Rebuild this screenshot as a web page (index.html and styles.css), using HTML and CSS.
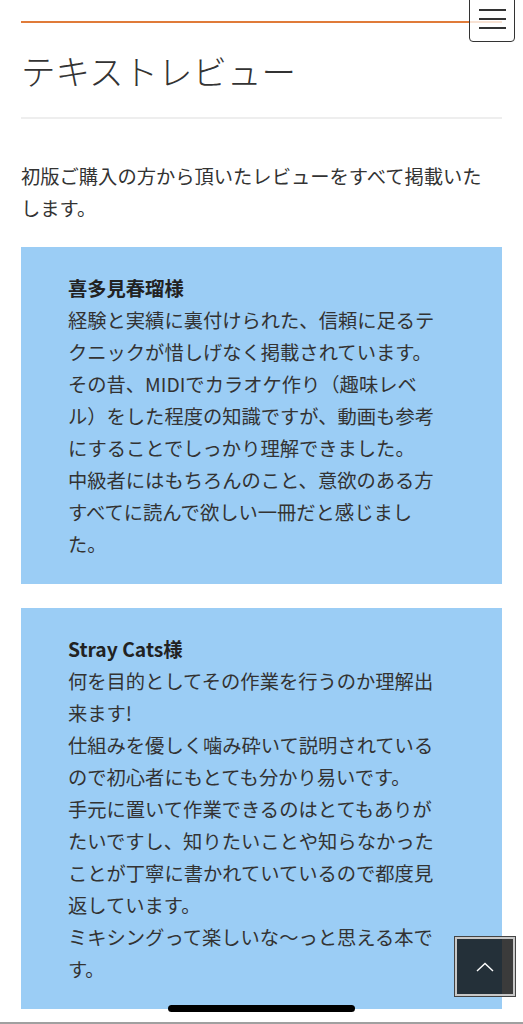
FILE: index.html
```html
<!DOCTYPE html>
<html lang="ja">
<head>
<meta charset="utf-8">
<title>テキストレビュー</title>
<link rel="stylesheet" href="styles.css">
</head>
<body>
<main class="page">
  <div class="top-rule"></div>
  <h1 class="title">テキストレビュー</h1>
  <div class="title-rule"></div>
  <p class="intro">初版ご購入の方から頂いたレビューをすべて掲載いたします。</p>

  <section class="review">
    <p class="name">喜多見春瑠様</p>
    <p class="body">経験と実績に裏付けられた、信頼に足るテクニックが惜しげなく掲載されています。<br>その昔、MIDIでカラオケ作り（趣味レベル）をした程度の知識ですが、動画も参考にすることでしっかり理解できました。<br>中級者にはもちろんのこと、意欲のある方すべてに読んで欲しい一冊だと感じました。</p>
  </section>

  <section class="review">
    <p class="name">Stray Cats様</p>
    <p class="body">何を目的としてその作業を行うのか理解出来ます!<br>仕組みを優しく噛み砕いて説明されているので初心者にもとても分かり易いです。<br>手元に置いて作業できるのはとてもありがたいですし、知りたいことや知らなかったことが丁寧に書かれていているので都度見返しています。<br>ミキシングって楽しいな〜っと思える本です。</p>
  </section>
  <div class="bottom-rule"></div>
</main>

<button class="menu-btn" aria-label="メニュー">
  <span class="bar"></span><span class="bar"></span><span class="bar"></span>
</button>

<button class="totop" aria-label="ページトップへ">
  <svg width="18" height="10" viewBox="0 0 18 10"><path d="M1 9 L9 1.5 L17 9" fill="none" stroke="#fff" stroke-width="1.4"/></svg>
</button>

<div class="home-indicator"></div>
</body>
</html>
```

FILE: styles.css
```css
* { box-sizing: border-box; }
html, body { margin: 0; padding: 0; background: #fff; }
body {
  font-family: "Noto Sans CJK JP", "Noto Sans", sans-serif;
  color: #333;
  overflow: hidden;
}
.page {
  padding: 21px 21px 0 21px;
}
.top-rule {
  height: 2px;
  background: #e07b39;
}
.title {
  margin: 23px 0 0 0;
  font-size: 34.5px;
  line-height: 48px;
  font-weight: 300;
  color: #333;
  letter-spacing: 0;
}
.title-rule {
  margin-top: 23px;
  height: 2px;
  background: #eeeeee;
}
.intro {
  margin: 41px 0 23px 0;
  padding-right: 10px;
  font-size: 19.3px;
  line-height: 32px;
}
.review {
  background: #9bcdf5;
  padding: 25px 60px 24px 47px;
  margin-bottom: 24px;
}
.review .name {
  margin: 0;
  font-size: 19.3px;
  line-height: 32px;
  font-weight: 700;
  color: #222;
}
.review .body {
  margin: 0;
  font-size: 19.3px;
  line-height: 32px;
  color: #333;
}
.bottom-rule {
  position: fixed;
  left: 0; right: 0; bottom: 0;
  height: 2px;
  background: #a0a0a0;
}
.menu-btn {
  position: fixed;
  top: -8px;
  right: 8px;
  width: 46px;
  height: 50px;
  padding: 0;
  background: rgba(255,255,255,0.78);
  border: 1px solid #333;
  border-radius: 4px;
  display: flex;
  flex-direction: column;
  align-items: center;
  justify-content: flex-start;
  gap: 7px;
  padding-top: 16px;
}
.menu-btn .bar {
  display: block;
  width: 27px;
  height: 2px;
  background: #333;
}
.totop {
  position: fixed;
  right: 8px;
  top: 937px;
  width: 60px;
  height: 59px;
  padding: 0;
  background: rgba(0,0,0,0.77);
  border: 2px solid #c8c8c8;
  outline: 1px solid #444;
  display: flex;
  align-items: center;
  justify-content: center;
}
.home-indicator {
  position: fixed;
  left: 168px;
  top: 1005px;
  width: 187px;
  height: 7px;
  border-radius: 4px;
  background: #000;
}
```
